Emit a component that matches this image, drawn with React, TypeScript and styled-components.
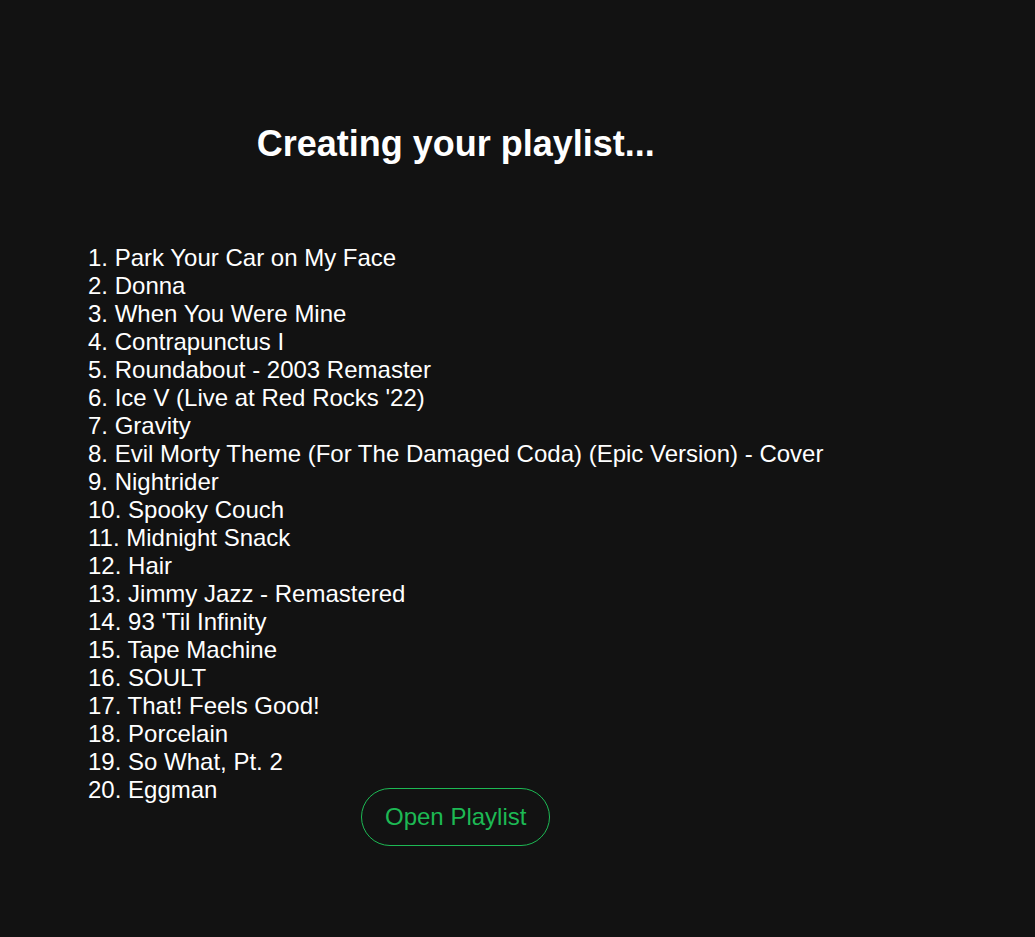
import React from "react";
import styled, { createGlobalStyle } from "styled-components";

const GlobalStyle = createGlobalStyle`
  html, body {
    margin: 0;
    padding: 0;
    background: #121212;
  }
  body {
    font-family: "Liberation Sans", Arial, sans-serif;
    color: #ffffff;
  }
`;

const Page = styled.main`
  min-height: 100vh;
  box-sizing: border-box;
  padding: 123px 0 0 88px;
  background: #121212;
`;

const Panel = styled.section`
  display: inline-flex;
  flex-direction: column;
  align-items: center;
`;

const Title = styled.h1`
  margin: 0 0 80px;
  font-size: 36px;
  font-weight: 700;
  line-height: 41px;
  color: #ffffff;
`;

const TrackList = styled.ol`
  align-self: stretch;
  margin: 0;
  padding: 0;
  list-style: none;
`;

const Track = styled.li`
  font-size: 24px;
  line-height: 28px;
  color: #ffffff;
  white-space: nowrap;
`;

const OpenButton = styled.button`
  position: relative;
  margin-top: -16px;
  padding: 14px 23px;
  border: 1px solid #1db954;
  border-radius: 999px;
  background: transparent;
  color: #1db954;
  font-family: "Liberation Sans", Arial, sans-serif;
  font-size: 24px;
  line-height: 28px;
  cursor: pointer;
`;

const tracks = [
  "Park Your Car on My Face",
  "Donna",
  "When You Were Mine",
  "Contrapunctus I",
  "Roundabout - 2003 Remaster",
  "Ice V (Live at Red Rocks '22)",
  "Gravity",
  "Evil Morty Theme (For The Damaged Coda) (Epic Version) - Cover",
  "Nightrider",
  "Spooky Couch",
  "Midnight Snack",
  "Hair",
  "Jimmy Jazz - Remastered",
  "93 'Til Infinity",
  "Tape Machine",
  "SOULT",
  "That! Feels Good!",
  "Porcelain",
  "So What, Pt. 2",
  "Eggman",
];

export default function App() {
  return (
    <>
      <GlobalStyle />
      <Page>
        <Panel>
          <Title>Creating your playlist...</Title>
          <TrackList>
            {tracks.map((t, i) => (
              <Track key={i}>
                {i + 1}. {t}
              </Track>
            ))}
          </TrackList>
          <OpenButton>Open Playlist</OpenButton>
        </Panel>
      </Page>
    </>
  );
}
